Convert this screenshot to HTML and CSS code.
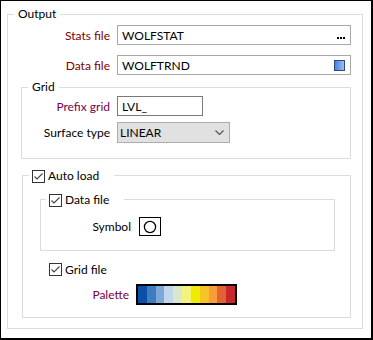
FILE: index.html
```html
<!DOCTYPE html>
<html>
<head>
  <link rel="stylesheet" href="styles.css">
</head>
<body>
<div class="frame">
  <fieldset class="group output">
    <legend>Output</legend>
    <div class="form-grid out-form">
      <label class="lbl red">Stats file</label>
      <div class="field wide">
        <span>WOLFSTAT</span>
        <svg class="dots" width="8" height="2" viewBox="0 0 8 2"><rect x="0" y="0" width="2" height="2"/><rect x="3" y="0" width="2" height="2"/><rect x="6" y="0" width="2" height="2"/></svg>
      </div>
      <label class="lbl red">Data file</label>
      <div class="field wide">
        <span>WOLFTRND</span>
        <span class="blue-btn"></span>
      </div>
    </div>

    <fieldset class="group grid-group">
      <legend>Grid</legend>
      <div class="form-grid grid-form">
        <label class="lbl purple">Prefix grid</label>
        <div class="field prefix">LVL_</div>
        <label class="lbl">Surface type</label>
        <div class="select">
          <span>LINEAR</span>
          <svg width="9" height="5" viewBox="0 0 9 5"><path d="M0.5 0.5 L4.5 4.5 L8.5 0.5" fill="none" stroke="#555" stroke-width="1.2"/></svg>
        </div>
      </div>
    </fieldset>

    <fieldset class="group autoload">
      <legend class="check-legend auto-legend"><span class="check"></span>Auto load</legend>

      <fieldset class="group datafile">
        <legend class="check-legend data-legend"><span class="check"></span>Data file</legend>
        <div class="sym-row">
          <label class="lbl">Symbol</label>
          <div class="symbol">
            <svg width="14" height="14" viewBox="0 0 14 14"><circle cx="7" cy="7" r="5.6" fill="none" stroke="#000" stroke-width="1.3"/></svg>
          </div>
        </div>
      </fieldset>

      <div class="check-row"><span class="check"></span>Grid file</div>

      <div class="pal-row">
        <label class="lbl purple">Palette</label>
        <div class="palette">
          <span style="background:#0a50a8"></span>
          <span style="background:#3e7cc0"></span>
          <span style="background:#7ca8d6"></span>
          <span style="background:#c0d6ec"></span>
          <span style="background:#d8e8cc"></span>
          <span style="background:#f5f37c"></span>
          <span style="background:#eeec00"></span>
          <span style="background:#f6c424"></span>
          <span style="background:#f89c3c"></span>
          <span style="background:#e06436"></span>
          <span style="background:#c8282c"></span>
        </div>
      </div>
    </fieldset>
  </fieldset>
</div>
</body>
</html>
```

FILE: styles.css
```css
/* Reset */
* {
  box-sizing: border-box;
}

body {
  margin: 0;
  background: #fff;
  color: #000;
  font: 12px Lato, "Noto Sans", sans-serif;
}

/* Dialog frame */
.frame {
  width: 373px;
  height: 340px;
  border: 1px solid #000;
  border-right-width: 2px;
  border-bottom-width: 2px;
  padding: 5px 0 0 6px;
}

/* Group boxes */
.group {
  margin: 0;
  padding: 0;
  min-width: 0;
  border: 1px solid #dcdcdc;
}

.group > legend {
  height: 16px;
  line-height: 16px;
  padding: 0 4px;
  margin-left: 6px;
}

.output {
  width: 356px;
  height: 323px;
}

.grid-group {
  width: 330px;
  margin: 4px 0 0 13px;
  padding-bottom: 15px;
}

.autoload {
  width: 329px;
  margin: 9px 0 0 14px;
  padding-bottom: 12px;
}

.datafile {
  width: 295px;
  margin: 9px 0 0 17px;
  padding-bottom: 14px;
}

/* Label + field rows */
.form-grid {
  display: grid;
  align-items: center;
  column-gap: 7px;
}

.out-form {
  grid-template-columns: 102px 234px;
  grid-auto-rows: 20px;
  row-gap: 10px;
  margin-top: 3px;
}

.grid-form {
  grid-template-columns: 88px auto;
  justify-content: start;
  row-gap: 6px;
  margin-top: 1px;
}

.lbl {
  text-align: right;
  white-space: nowrap;
}

.red {
  color: #800000;
}

.purple {
  color: #7a0046;
}

.field {
  height: 20px;
  display: flex;
  align-items: center;
  padding: 0 4px;
  border: 1px solid #a8a8a8;
  background: #fff;
}

.wide {
  justify-content: space-between;
  padding-right: 5px;
}

.dots {
  fill: #000;
  margin-top: 6px;
}

.blue-btn {
  width: 11px;
  height: 11px;
  border: 1px solid #2c4a80;
  background: linear-gradient(to right, #4a7fe0, #9cc0f6);
}

.prefix {
  width: 86px;
  border-color: #7a7a7a;
}

.select {
  width: 113px;
  height: 21px;
  display: flex;
  align-items: center;
  justify-content: space-between;
  padding: 0 5px 0 2px;
  border: 1px solid #adadad;
  background: #e1e1e1;
}

/* Checkboxes */
.check {
  width: 13px;
  height: 13px;
  flex: none;
  border: 1px solid #333;
  background: #fff url("data:image/svg+xml;utf8,<svg xmlns='http://www.w3.org/2000/svg' width='11' height='11'><path d='M1.5 5.5 L4 8 L9.5 2.5' fill='none' stroke='%23444' stroke-width='1.1'/></svg>") no-repeat center;
}

.group > .check-legend {
  display: flex;
  align-items: flex-start;
  gap: 3px;
  height: 15px;
  line-height: 15px;
  padding: 0 15px 0 3px;
}

.check-legend .check {
  margin-top: 2px;
}

.auto-legend {
  margin-left: 8px;
  padding-right: 18px;
}

.group > .data-legend {
  margin-left: 5px;
}

.check-row {
  display: flex;
  align-items: center;
  gap: 3px;
  height: 13px;
  margin: 12px 0 0 26px;
}

/* Symbol */
.sym-row {
  display: grid;
  grid-template-columns: 90px 22px;
  column-gap: 8px;
  align-items: center;
  margin-top: 10px;
}

.symbol {
  width: 22px;
  height: 19px;
  border: 1px solid #000;
  display: flex;
  align-items: center;
  justify-content: center;
}

/* Palette */
.pal-row {
  display: grid;
  grid-template-columns: 106px 101px;
  column-gap: 7px;
  align-items: center;
  margin-top: 8px;
}

.palette {
  display: flex;
  height: 21px;
  border: 2px solid #000;
}

.palette span {
  flex: 1;
}
```
